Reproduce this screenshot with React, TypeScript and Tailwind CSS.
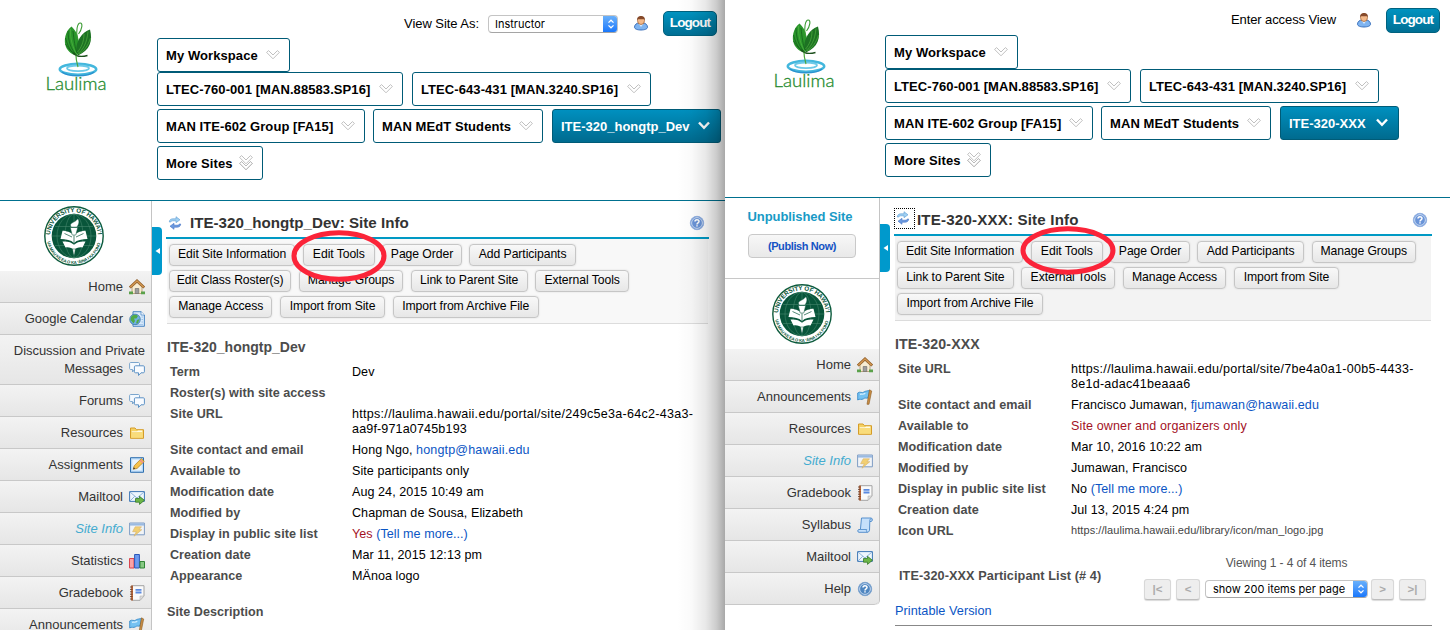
import React from "react";

const FONT = "font-['Liberation_Sans',Arial,sans-serif]";

function Chevron({ active = false, double = false }: { active?: boolean; double?: boolean }) {
  if (active)
    return (
      <svg width="14" height="12" viewBox="0 0 14 12" fill="none">
        <path d="M2 2.5 L7 7.8 L12 2.5" stroke="#fff" strokeWidth="2.4" />
      </svg>
    );
  const d = "M2.6 .6 L.6 2.4 L7 8.8 L13.4 2.4 L11.4 .6 L7 5 Z";
  return (
    <svg width="14" height={double ? 16 : 12} viewBox={double ? "0 0 14 16" : "0 -1 14 12"} fill="#fff" stroke="#b9b9b9" strokeWidth=".9">
      {double && <path d={d} transform="translate(0 6)" />}
      <path d={d} />
      {double && <path d={d} fill="none" transform="translate(0 6)" />}
    </svg>
  );
}

function Tab({ label, w, active, double }: { label: string; w: string; active?: boolean; double?: boolean }) {
  return (
    <div
      className={`flex h-[34px] shrink-0 items-center justify-between rounded-[3px] border border-[#005b77] pl-2 pr-[9px] text-[13px] font-bold whitespace-nowrap ${w} ${
        active ? "bg-linear-to-b from-[#0090bf] to-[#006b8f] tracking-[0px] text-white" : "bg-white tracking-[0.08px] text-black"
      }`}
    >
      <span className="pt-[2px]">{label}</span>
      <Chevron active={active} double={double} />
    </div>
  );
}

function Tabs({ current, currentW }: { current: string; currentW: string }) {
  return (
    <div className="flex flex-col">
      <div className="flex h-[34px]">
        <Tab label="My Workspace" w="w-[133px]" />
      </div>
      <div className="flex h-[37px] gap-[9px]">
        <Tab label="LTEC-760-001 [MAN.88583.SP16]" w="w-[246px]" />
        <Tab label="LTEC-643-431 [MAN.3240.SP16]" w="w-[239px]" />
      </div>
      <div className="flex h-[37px]">
        <Tab label="MAN ITE-602 Group [FA15]" w="w-[208px] mr-2" />
        <Tab label="MAN MEdT Students" w="w-[170px] mr-[9px]" />
        <Tab label={current} w={currentW} active />
      </div>
      <Tab label="More Sites" w="w-[106px]" double />
    </div>
  );
}

function Laulima() {
  return (
    <svg width="66" height="74" viewBox="0 0 66 74" fill="none">
      <ellipse cx="34" cy="49.3" rx="18.2" ry="5.4" stroke="#43b7dd" strokeWidth="2.6" />
      <path d="M18 52 C24 57 44 57 50 52" stroke="#2b93cf" strokeWidth="1.6" />
      <ellipse cx="34" cy="48.3" rx="11" ry="2.8" stroke="#6cc9e8" strokeWidth="1.8" fill="#fff" />
      <path d="M27.5 6.5 C21 11 19.5 21 22 27 C24 32 29 35 33 35.5 C36 30 37 15 27.5 6.5Z" fill="#2a962b" />
      <path d="M46 9.5 C49 21 46 30 34 35.5 C30.5 30 33 22 36 17.5 C38.5 13.5 42 11 46 9.5Z" fill="#1d7223" />
      <path d="M24 11 C24 20 27 30 32 34 M29 11 C30 20 31 28 33 33 M21.5 18 C24 27 27 32 31 34 M21.5 24 C25 29 27 32 31 34" stroke="#14611b" strokeWidth=".8" />
      <path d="M26.5 9 C26 19 29 28 32.5 34 M44 11.5 C43 23 39 30 33.5 34 M40 14 C40 22 37 28 33.5 32 M46.5 18 C44 26 40 31 35 34" stroke="#58b843" strokeWidth=".6" />
      <path d="M33.5 19 C31.5 11 33.5 3 36.2 3 C39 3 38.3 9 34.5 14" stroke="#3b9b34" strokeWidth="1.1" />
      <path d="M29 33 C33 37.5 38 37 43.5 35.5" stroke="#1b4f1c" strokeWidth="1.3" />
      <path d="M32 35.5 C32 40 33 43 34 47" stroke="#4aa53c" strokeWidth="1.2" />
      <text x="1.5" y="70" fontFamily="Lato, sans-serif" fontSize="17" fontWeight="300" fill="#248a2c" stroke="#248a2c" strokeWidth=".3" textLength="61" lengthAdjust="spacingAndGlyphs">
        Laulima
      </text>
    </svg>
  );
}

function Seal({ id }: { id: string }) {
  return (
    <svg width="60" height="60" viewBox="0 0 60 60" fill="none">
      <defs>
        <path id={`${id}-top`} d="M6.2 30 A23.8 23.8 0 0 1 53.8 30" />
        <path id={`${id}-bottom`} d="M2.9 33 A27.2 27.2 0 0 0 57.1 33" />
      </defs>
      <circle cx="30" cy="30" r="29.2" fill="#fff" stroke="#0c5a3c" strokeWidth="1.4" />
      <circle cx="30" cy="30" r="22.3" fill="#08553a" />
      <g stroke="#4f8e75" strokeWidth=".5">
        <ellipse cx="30" cy="30" rx="9" ry="21.8" />
        <ellipse cx="30" cy="30" rx="17" ry="21.8" />
        <path d="M8 30H52M11 20.5H49M11 39.5H49M30 8V52" />
      </g>
      <path d="M18.5 24.8 C22 25 27 26 30 29.5 C33 26 38 25 41.5 24.8 L43.5 33 C38 33 33 34 30 37 C27 34 22 33 16.5 33Z" fill="#fff" />
      <path d="M18.5 35.5 C23 35 27.5 36 30 38.8 C32.5 36 37 35 41.5 35.5 L38.5 41.5 C35 41 32 42 30 44 C28 42 25 41 21.5 41.5Z" fill="#fff" />
      <path d="M26.3 21.5H33.7L31.8 29H28.2Z M28.6 43H31.4L30.5 48.5H29.5Z" fill="#fff" stroke="#08553a" strokeWidth=".5" />
      <path d="M27.2 21 C24.5 16.5 31 17 33.8 12.8 C36 15.5 34.5 19 32.8 21Z" fill="#fff" stroke="#08553a" strokeWidth=".4" />
      <path d="M30 29.5V37M20.5 27.5 L28 31M39.5 27.5 L32 31" stroke="#08553a" strokeWidth=".7" />
      <text fontFamily="Liberation Sans" fontWeight="700" fontSize="6.2" fill="#08553a">
        <textPath href={`#${id}-top`} startOffset="1" textLength="72">UNIVERSITY OF HAWAI‘I</textPath>
      </text>
      <text fontFamily="Liberation Sans" fontWeight="700" fontSize="4.2" fill="#08553a">
        <textPath href={`#${id}-bottom`} startOffset="3" textLength="73">UA MAU KE EA O KA ‘ĀINA I KA PONO</textPath>
      </text>
    </svg>
  );
}

function HelpIcon({ dark = false }: { dark?: boolean }) {
  return (
    <svg width="16" height="16" viewBox="0 0 16 16">
      <circle cx="8" cy="8" r="6.7" fill={dark ? "#4f86c0" : "#6a94d8"} stroke={dark ? "#7da3cd" : "#94b2e2"} />
      <circle cx="8" cy="8" r="5.4" fill="none" stroke="#d4e2f5" strokeWidth=".9" />
      <path d="M6 6.6 C6 4.2 10 4.2 10 6.5 C10 7.9 8 7.8 8 9.4 M8 10.3V11.6" stroke="#fff" strokeWidth="1.5" fill="none" />
    </svg>
  );
}

function UserIcon() {
  return (
    <svg width="16" height="16" viewBox="0 0 16 16">
      <path d="M1.5 12.2 C1.5 9.4 4 8 6 8 H10 C12.5 8 14.5 9.8 14.5 12.2 C14.5 14 11.5 15 8 15 C4.5 15 1.5 14 1.5 12.2Z" fill="#7fb4f0" stroke="#2f66b5" strokeWidth=".9" />
      <path d="M5.5 8.5 L8 12 L10.5 8.5Z" fill="#d9ebff" />
      <ellipse cx="8" cy="5.6" rx="3.5" ry="3.9" fill="#f3b98a" stroke="#9a5a2a" strokeWidth=".7" />
      <path d="M4.2 5.2 C3.8 2.2 6 1 8 1 C10.2 1 12.2 2.2 11.8 5.2 L10.8 3.9 C9 4.6 6.5 4.3 5.3 3.9Z" fill="#85492a" />
    </svg>
  );
}

function RefreshIcon() {
  return (
    <svg width="14" height="14" viewBox="0 0 14 14" strokeLinejoin="round">
      <path d="M1.3 6 C1.5 3.6 3 2.8 5 2.8 H8 V.7 L12 3.8 L8 6.7 V4.8 H5 C3.7 4.8 3 5.2 2.8 6Z" fill="#9fd0f2" stroke="#5c9bd4" strokeWidth=".6" />
      <path d="M12.7 8 C12.5 10.4 11 11.2 9 11.2 H6 V13.3 L2 10.2 L6 7.3 V9.2 H9 C10.3 9.2 11 8.8 11.2 8Z" fill="#6b9ae0" stroke="#4674c4" strokeWidth=".6" />
    </svg>
  );
}

function Icon({ name }: { name: string }) {
  const shapes: Record<string, React.ReactNode> = {
    home: (
      <>
        <path d="M3 8 L8 3.5 L13 8 V14.5 H3Z" fill="#f7ecd2" stroke="#a98756" strokeWidth=".7" />
        <path d="M.8 8.6 L8 1.8 L15.2 8.6" fill="none" stroke="#8d5a24" strokeWidth="2.6" />
        <path d="M1.3 8.2 L8 1.9 L14.7 8.2" fill="none" stroke="#d79b54" strokeWidth="1.3" />
        <path d="M6.2 9.5H9.8V14.5H6.2Z" fill="#9c9c9c" stroke="#666" strokeWidth=".6" />
        <path d="M0 12.5 H4 V15.3 H0Z M12 12.5H16V15.3H12Z" fill="#5aa14a" />
      </>
    ),
    calendar: (
      <>
        <path d="M4 .7 H12 L15.4 4 V15.3 H4Z" fill="#d7e9fb" stroke="#3a7cc0" strokeWidth=".9" />
        <path d="M12 .7 V4 H15.4" fill="#fff" stroke="#3a7cc0" strokeWidth=".7" />
        <path d="M12.5 6H14M12.5 8.5H14M12.5 11H14M6 13.7H14" stroke="#8db7e2" strokeWidth=".8" />
        <circle cx="6" cy="8.4" r="5.3" fill="#6fb0e6" stroke="#2f6b9d" strokeWidth=".7" />
        <path d="M2 6 C4 3.5 7 3.2 9 5 L7.5 7.5 L5 7.5 L6 10 L4.5 12.5 L1.5 9Z M8 9L10.6 8L9 12L7 12.5Z" fill="#50ab47" />
      </>
    ),
    chat: (
      <>
        <path d="M1.5 1.5 H9.5 C10 1.5 10.5 2 10.5 2.5 V7.5 C10.5 8 10 8.5 9.5 8.5 H5.5 L3.5 11 V8.5 H1.5 C1 8.5 .6 8 .6 7.5 V2.5 C.6 2 1 1.5 1.5 1.5Z" fill="#f4f9fe" stroke="#7aa5cd" />
        <path d="M6.5 4.8 H14.3 C15 4.8 15.4 5.2 15.4 5.8 V10.8 C15.4 11.4 15 11.8 14.3 11.8 H12 L9.5 14.5 V11.8 H6.5 C5.8 11.8 5.4 11.4 5.4 10.8 V5.8 C5.4 5.2 5.8 4.8 6.5 4.8Z" fill="#f8fbff" stroke="#5d92c5" />
      </>
    ),
    folder: (
      <>
        <path d="M1.5 3 H6 L7.5 4.7 H14.5 V13.3 H1.5Z" fill="#f5d264" stroke="#d59c28" />
        <path d="M2.7 6.2 H8 L9 5.4 H13.3 V7.2H2.7Z" fill="#fffbe6" />
        <path d="M2.2 8 H8.2 L9.2 7 H13.8 V12.7 H2.2Z" fill="#f9dc7b" />
      </>
    ),
    assign: (
      <>
        <path d="M1.5 .7 H14.5 V15.3 H1.5Z" fill="#b8d9f7" stroke="#2f6fae" />
        <path d="M3.3 2.5H12.7V13.5H3.3Z" fill="#eaf5ff" />
        <path d="M4.2 12.3 L5.2 8.7 L12.3 1.6 L15.3 4.4 L8 11.5Z" fill="#f6c24c" stroke="#a97a20" strokeWidth=".7" />
        <path d="M11 3 L14 5.8" stroke="#e89" strokeWidth="1.2" />
        <path d="M4.2 12.3 L4.8 10.3 L6.2 11.7Z" fill="#333" />
      </>
    ),
    mail: (
      <>
        <path d="M.6 2.6 H15.4 V12.4 H.6Z" fill="#eef6fd" stroke="#3d77b5" />
        <path d="M1 3 L8 9 L15 3 M1 12 L5.8 7.2 M15 12 L10.2 7.2" stroke="#8fb4da" fill="none" />
        <path d="M6.5 9.5 H10.5 V7.3 L15.4 11.3 L10.5 15.4 V13.2 H6.5Z" fill="#6cb648" stroke="#35792a" strokeWidth=".8" />
      </>
    ),
    info: (
      <g opacity=".72">
        <path d="M.6 2 H15.4 V13.8 H.6Z" fill="#f4f8fc" stroke="#557fb5" />
        <path d="M1 2.3 H15 V4.6 H1Z" fill="#7ba7dc" />
        <path d="M6.2 5.8 H12.5 L10 8.7 H12.8 L5 15.2 L7.3 10.7 H3.6Z" fill="#f5c544" stroke="#cf9a35" strokeWidth=".6" />
      </g>
    ),
    stats: (
      <>
        <path d="M.5 5.5 H5 V15 H.5Z" fill="#f9a3a6" stroke="#d9454e" />
        <path d="M5.6 1.5 H10.4 V15 H5.6Z" fill="#6b9af0" stroke="#2c57b8" />
        <path d="M11 8.5 H15.5 V15 H11Z" fill="#87c983" stroke="#318536" />
      </>
    ),
    grade: (
      <>
        <path d="M2.5 .7 H15 V11 L11 15.3 H2.5Z" fill="#fafafa" stroke="#a3a3a3" />
        <path d="M15 11 H11 V15.3Z" fill="#ddd" stroke="#b5b5b5" strokeWidth=".6" />
        <path d="M2.2 .5H4V15.5H2.2Z" fill="#c06a3d" />
        <path d="M1 2H3.6M1 4.4H3.6M1 6.8H3.6M1 9.2H3.6M1 11.6H3.6M1 14H3.6" stroke="#6b3c25" strokeWidth=".9" />
        <path d="M6.5 4.8 H12.5 M6.5 7.5 H12.5" stroke="#5b8ae0" strokeWidth="1.8" />
      </>
    ),
    flag: (
      <>
        <path d="M.7 4 C3 2 5 4.6 7 3 C8.5 1.8 10.5 2 12.5 1.5 L11 9 C9 9.5 8 8.5 6.5 9.8 C4.5 11.3 2.5 9.3 .7 11Z" fill="#75c2f2" stroke="#2c83c5" strokeWidth=".8" />
        <path d="M3 5.3 C5 4.8 6 6 8.3 4.3" stroke="#d6f0ff" strokeWidth="1.2" fill="none" />
        <path d="M12.5 .8 L14.7 2 L12 15.3 L10 15.3Z" fill="#c78c43" stroke="#8b5a22" strokeWidth=".6" />
      </>
    ),
    scroll: (
      <>
        <path d="M4.5 1 H14 C16 1.2 15.8 4.3 14 4.5 H12.8 L12.5 13.2 C12.2 14.6 11.3 15.3 10 15.3 H2 C.3 15.2 .4 12.8 1.8 12.5 H3.4 Z" fill="#c5e0fb" stroke="#4887c8" strokeWidth=".9" />
        <path d="M12.8 4.5 V2.8 C13 1.8 14 1.6 14.3 2.7 M3.4 12.5 H9.7 C9 13.5 9.6 15 10.4 15.2" fill="none" stroke="#4887c8" strokeWidth=".8" />
      </>
    ),
  };
  if (name === "help") return <HelpIcon dark />;
  return (
    <svg width="16" height="16" viewBox="0 0 16 16" className="shrink-0">
      {shapes[name]}
    </svg>
  );
}

function NavItem({ label, icon, last }: { label: string; icon: string; last?: boolean }) {
  const tone = label === "Site Info" ? "italic text-[#44abd0]" : "text-[#333]";
  return (
    <div
      className={`flex h-8 shrink-0 items-center justify-end gap-[6px] border-b border-[#c8c8c8] bg-linear-to-b from-[#f3f3f3] to-[#e6e6e6] pr-[6px] text-[13px] ${tone} ${
        last ? "rounded-br-[5px]" : ""
      }`}
    >
      <span>{label}</span>
      <Icon name={icon} />
    </div>
  );
}

const buttonWidth: Record<string, string> = {
  "Edit Site Information": "w-[126.3px]",
  "Edit Tools": "w-[71.7px]",
  "Page Order": "w-[79.3px]",
  "Add Participants": "w-[106.6px]",
  "Manage Groups": "w-[104.2px]",
  "Edit Class Roster(s)": "w-[122.3px]",
  "Link to Parent Site": "w-[116.7px]",
  "External Tools": "w-[93.8px]",
  "Manage Access": "w-[103.4px]",
  "Import from Site": "w-[105px]",
  "Import from Archive File": "w-[145.8px]",
};

function Btn({ label }: { label: string }) {
  return (
    <button
      className={`flex h-[22px] shrink-0 justify-center rounded-[4px] border border-[#c6c6c6] bg-linear-to-b from-[#f8f8f8] to-[#e7e7e7] text-[12.2px] leading-[19px] tracking-[-0.07px] whitespace-nowrap text-black shadow-[0_0_2px_rgba(0,0,0,0.12)] ${buttonWidth[label]}`}
    >
      {label}
    </button>
  );
}

function Toolbar({ rows, bg }: { rows: string[][]; bg: string }) {
  return (
    <div className={`mx-px flex h-[85px] flex-col gap-1 border-b border-[#dcdcdc] pt-[5px] pl-[2px] ${bg}`}>
      {rows.map((r, i) => (
        <div key={i} className="flex gap-[7.7px]">
          {r.map((l) => (
            <Btn key={l} label={l} />
          ))}
        </div>
      ))}
    </div>
  );
}

function Handle() {
  return (
    <div className="mt-[26px] flex h-12 w-[10px] shrink-0 items-center justify-center rounded-r-[4px] bg-[#0099cc]">
      <svg width="5" height="6" viewBox="0 0 5 6">
        <path d="M5 0 V6 L.5 3Z" fill="#fff" />
      </svg>
    </div>
  );
}

function Details({ rows, labelW }: { rows: [string, React.ReactNode][]; labelW: string }) {
  return (
    <dl className="mt-[6px] flex flex-col text-[12.55px] leading-[15px] tracking-[0.06px]">
      {rows.map(([k, v]) => (
        <div key={k} className="flex pt-1 pb-[2px]">
          <dt className={`shrink-0 text-[12.6px] font-bold tracking-[0.03px] text-[#4c4c4c] ${labelW}`}>{k}</dt>
          <dd className="whitespace-nowrap text-black">{v}</dd>
        </div>
      ))}
    </dl>
  );
}

function Link({ children }: { children: React.ReactNode }) {
  return <a className="text-[#0b55c4]">{children}</a>;
}

function Select({ label, className }: { label: string; className: string }) {
  return (
    <div
      className={`flex h-[18px] items-stretch justify-between overflow-hidden rounded-[4px] border border-[#c4c4c4] border-b-[#a5a5a5] bg-white font-[Inter,sans-serif] text-[11px] leading-[17px] text-black ${className}`}
    >
      <span className="whitespace-nowrap">{label}</span>
      <span className="-my-px -mr-px flex w-[15px] items-center justify-center bg-linear-to-b from-[#6db3fa] to-[#1073fb]">
        <svg width="8" height="10" viewBox="0 0 8 10" fill="none" stroke="#fff" strokeWidth="1.2">
          <path d="M1.5 3.6 L4 1.2 L6.5 3.6 M1.5 6.4 L4 8.8 L6.5 6.4" />
        </svg>
      </span>
    </div>
  );
}

function Logout() {
  return (
    <button className="h-[25px] w-[54px] rounded-[5px] border border-[#00627f] bg-linear-to-b from-[#0093c0] to-[#006f94] text-[13.5px] font-bold tracking-[-0.9px] text-white">
      Logout
    </button>
  );
}

function PageBtn({ label, w }: { label: string; w: string }) {
  return (
    <div className={`flex h-[21px] items-center justify-center rounded-[3px] border border-[#d8d8d8] border-b-[#bdbdbd] bg-[#eeeeee] text-[11.5px] font-bold text-[#ababab] shadow-[0_1px_1px_rgba(0,0,0,0.15)] ${w}`}>
      {label}
    </div>
  );
}

function Ring({ h, ry, className }: { h: number; ry: number; className: string }) {
  return (
    <svg width="96" height={h} viewBox={`0 0 96 ${h}`} className={`pointer-events-none absolute ${className}`}>
      <ellipse cx="48" cy={h / 2} rx="45" ry={ry} fill="none" stroke="#fb2439" strokeWidth="5" />
    </svg>
  );
}

const leftNav: [string, string][] = [
  ["Forums", "chat"],
  ["Resources", "folder"],
  ["Assignments", "assign"],
  ["Mailtool", "mail"],
  ["Site Info", "info"],
  ["Statistics", "stats"],
  ["Gradebook", "grade"],
  ["Announcements", "flag"],
];

const rightNav: [string, string][] = [
  ["Home", "home"],
  ["Announcements", "flag"],
  ["Resources", "folder"],
  ["Site Info", "info"],
  ["Gradebook", "grade"],
  ["Syllabus", "scroll"],
  ["Mailtool", "mail"],
  ["Help", "help"],
];

function LeftPage() {
  return (
    <section className="relative flex h-full w-[725px] shrink-0 flex-col overflow-hidden bg-white">
      <header className="flex h-[201px] shrink-0 border-b border-[#00708f]">
        <div className="w-[157px] shrink-0 pt-[20px] pl-[44px]">
          <Laulima />
        </div>
        <div className="flex flex-1 flex-col">
          <div className="flex h-[38px] items-start justify-end pr-2 text-[13px]">
            <span className="mt-[16px] mr-[9px] leading-4 tracking-[-0.05px]">View Site As:</span>
            <Select label="Instructor" className="mt-[15px] w-[130px] pl-[6px]" />
            <div className="mt-[15px] mr-[14px] ml-[15px]">
              <UserIcon />
            </div>
            <div className="mt-[11px]">
              <Logout />
            </div>
          </div>
          <Tabs current="ITE-320_hongtp_Dev" currentW="w-[169px]" />
        </div>
      </header>
      <div className="flex min-h-0 flex-1">
        <nav className="flex w-[152px] shrink-0 flex-col border-r border-[#c4c4c4]">
          <div className="h-[70px] shrink-0 pt-[5px] pl-[44px]">
            <Seal id="seal-left" />
          </div>
          <NavItem label="Home" icon="home" />
          <NavItem label="Google Calendar" icon="calendar" />
          <div className="flex h-[50px] shrink-0 flex-col items-end border-b border-[#c8c8c8] bg-linear-to-b from-[#f3f3f3] to-[#e6e6e6] pt-[7px] pr-[6px] text-[13px] leading-[18px] tracking-[-0.05px] text-[#333]">
            <span>Discussion and Private</span>
            <span className="flex items-center gap-[6px]">
              Messages <Icon name="chat" />
            </span>
          </div>
          {leftNav.map(([l, i]) => (
            <NavItem key={l} label={l} icon={i} />
          ))}
        </nav>
        <Handle />
        <main className="ml-1 flex w-[543px] flex-col">
          <div className="flex h-[38px] shrink-0 items-center border-b-2 border-[#0099c4] pt-[7px] pr-1 pl-[2px]">
            <RefreshIcon />
            <h1 className="ml-2 flex-1 pt-px text-[15.15px] font-bold text-[#333]">ITE-320_hongtp_Dev: Site Info</h1>
            <HelpIcon />
          </div>
          <Toolbar
            bg="bg-[#f8f8f8]"
            rows={[
              ["Edit Site Information", "Edit Tools", "Page Order", "Add Participants"],
              ["Edit Class Roster(s)", "Manage Groups", "Link to Parent Site", "External Tools"],
              ["Manage Access", "Import from Site", "Import from Archive File"],
            ]}
          />
          <div className="pl-px">
            <h2 className="mt-[15px] text-[14px] leading-4 font-bold text-[#4c4c4c]">ITE-320_hongtp_Dev</h2>
            <div className="pl-[3px]">
              <Details
                labelW="w-[182px]"
                rows={[
                  ["Term", "Dev"],
                  ["Roster(s) with site access", ""],
                  ["Site URL", <><span className="tracking-[0.28px]">https://laulima.hawaii.edu/portal/site/249c5e3a-64c2-43a3-</span><br /><span className="tracking-[0.15px]">aa9f-971a0745b193</span></>],
                  ["Site contact and email", <>Hong Ngo, <span className="tracking-[0.15px]"><Link>hongtp@hawaii.edu</Link></span></>],
                  ["Available to", "Site participants only"],
                  ["Modification date", "Aug 24, 2015 10:49 am"],
                  ["Modified by", "Chapman de Sousa, Elizabeth"],
                  ["Display in public site list", <><span className="text-[#a3121f]">Yes</span> <Link>(Tell me more...)</Link></>],
                  ["Creation date", "Mar 11, 2015 12:13 pm"],
                  ["Appearance", "MÄnoa logo"],
                ]}
              />
            </div>
            <h3 className="mt-[18px] text-[12.6px] leading-4 font-bold tracking-[0.04px] text-[#4c4c4c]">Site Description</h3>
          </div>
        </main>
      </div>
      <Ring h={52} ry={23.2} className="top-[230px] left-[291px]" />
      <div className="pointer-events-none absolute inset-y-0 right-0 w-[48px] bg-[linear-gradient(to_right,rgba(0,0,0,0),rgba(0,0,0,0.02)_30%,rgba(0,0,0,0.09)_60%,rgba(0,0,0,0.2)_82%,rgba(0,0,0,0.34))]" />
    </section>
  );
}

function RightPage() {
  return (
    <section className="relative flex h-full w-[725px] shrink-0 flex-col overflow-hidden bg-white">
      <header className="flex h-[198px] shrink-0 border-b border-[#00708f]">
        <div className="w-[160px] shrink-0 pt-[17px] pl-[47px]">
          <Laulima />
        </div>
        <div className="flex flex-1 flex-col">
          <div className="flex h-[35px] items-start justify-end pr-[10px] text-[13px]">
            <span className="mt-[12px] mr-[20px] leading-4 tracking-[-0.1px]">Enter access View</span>
            <div className="mt-[12px] mr-[14px]">
              <UserIcon />
            </div>
            <div className="mt-[8px]">
              <Logout />
            </div>
          </div>
          <Tabs current="ITE-320-XXX" currentW="w-[119px]" />
        </div>
      </header>
      <div className="flex min-h-0 flex-1">
        <nav className="flex h-[407px] w-[155px] shrink-0 flex-col overflow-hidden rounded-br-[5px] border-r border-[#c4c4c4]">
          <div className="flex h-[81px] shrink-0 flex-col items-center border-b border-[#c8c8c8] pt-[11px]">
            <div className="pr-[4px] text-[13px] leading-4 font-bold tracking-[-0.08px] text-[#189ac6]">Unpublished Site</div>
            <button className="mt-[9px] h-6 w-[108px] rounded-[4px] border border-[#c9c9c9] bg-linear-to-b from-[#f7f7f7] to-[#e9e9e9] text-[11px] font-bold tracking-[-0.4px] text-[#1453c4]">
              (Publish Now)
            </button>
          </div>
          <div className="h-[70px] shrink-0 pt-[5px] pl-[47px]">
            <Seal id="seal-right" />
          </div>
          {rightNav.map(([l, i]) => (
            <NavItem key={l} label={l} icon={i} last={l === "Help"} />
          ))}
        </nav>
        <Handle />
        <main className="ml-1 flex w-[538px] flex-col">
          <div className="flex h-[38px] shrink-0 items-center border-b-2 border-[#0099c4] pt-[7px] pr-1">
            <div className="mb-[3px] flex h-[21px] w-[21px] items-center justify-center border border-dotted border-black pr-[3px]">
              <RefreshIcon />
            </div>
            <h1 className="ml-[2px] flex-1 pt-px text-[15.1px] font-bold tracking-[0.18px] text-[#333]">ITE-320-XXX: Site Info</h1>
            <HelpIcon />
          </div>
          <Toolbar
            bg="bg-[#f3f3f3]"
            rows={[
              ["Edit Site Information", "Edit Tools", "Page Order", "Add Participants", "Manage Groups"],
              ["Link to Parent Site", "External Tools", "Manage Access", "Import from Site"],
              ["Import from Archive File"],
            ]}
          />
          <div className="pl-px">
            <h2 className="mt-[15px] text-[14.2px] leading-4 font-bold tracking-[0.12px] text-[#4c4c4c]">ITE-320-XXX</h2>
            <div className="pl-[3px]">
              <Details
                labelW="w-[173px]"
                rows={[
                  ["Site URL", <><span className="tracking-[0.28px]">https://laulima.hawaii.edu/portal/site/7be4a0a1-00b5-4433-</span><br /><span className="tracking-[0.25px]">8e1d-adac41beaaa6</span></>],
                  ["Site contact and email", <>Francisco Jumawan, <span className="tracking-[0.1px]"><Link>fjumawan@hawaii.edu</Link></span></>],
                  ["Available to", <span className="tracking-[0.12px] text-[#a3121f]">Site owner and organizers only</span>],
                  ["Modification date", "Mar 10, 2016 10:22 am"],
                  ["Modified by", "Jumawan, Francisco"],
                  ["Display in public site list", <>No <Link>(Tell me more...)</Link></>],
                  ["Creation date", "Jul 13, 2015 4:24 pm"],
                  ["Icon URL", <span className="relative -top-px text-[11px] tracking-[0.07px] text-[#444]">https://laulima.hawaii.edu/library/icon/man_logo.jpg</span>],
                ]}
              />
            </div>
            <div className="mt-[14px] flex h-[46px] justify-between pr-[6px] pl-1">
              <div className="pt-[13px] text-[12.7px] leading-4 font-bold tracking-[0.08px] text-[#4c4c4c]">ITE-320-XXX Participant List (# 4)</div>
              <div className="flex w-[282px] flex-col">
                <div className="pl-[3px] text-center text-[12px] leading-4 tracking-[-0.12px] text-[#555]">Viewing 1 - 4 of 4 items</div>
                <div className="mt-[8px] flex items-start">
                  <PageBtn label="|<" w="w-[27px] mr-[5px]" />
                  <PageBtn label="<" w="w-[24px] mr-[5px]" />
                  <Select label="show 200 items per page" className="mt-px mr-[3px] w-[163px] pl-[7px]" />
                  <PageBtn label=">" w="w-[23px] mr-[5px]" />
                  <PageBtn label=">|" w="w-[27px]" />
                </div>
              </div>
            </div>
            <div className="flex h-[25px] items-start border-b border-[#888]">
              <span className="pt-[2px] text-[12.7px] leading-4 tracking-[0.04px]"><Link>Printable Version</Link></span>
            </div>
          </div>
        </main>
      </div>
      <Ring h={49} ry={21.7} className="top-[226px] left-[295px]" />
    </section>
  );
}

export default function App() {
  return (
    <div className={`flex h-[630px] w-[1450px] overflow-hidden bg-white text-black ${FONT}`}>
      <LeftPage />
      <RightPage />
    </div>
  );
}
